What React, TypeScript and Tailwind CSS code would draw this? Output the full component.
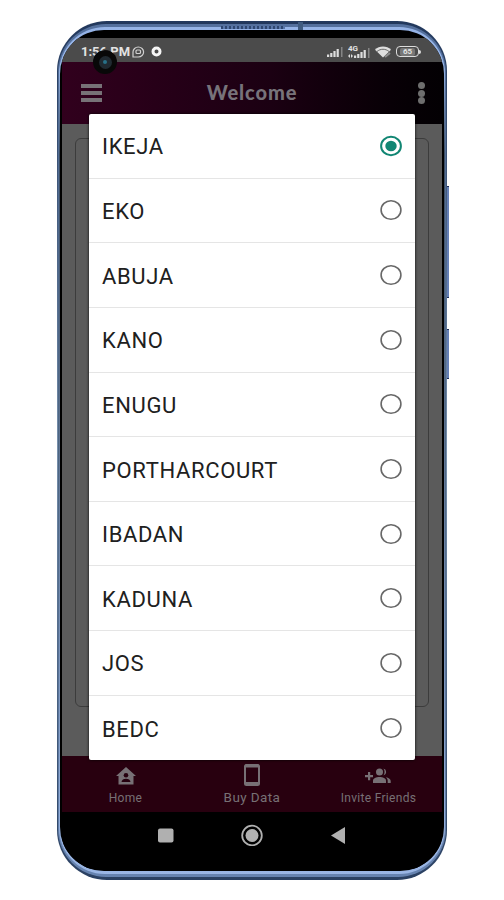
import { useState } from "react";

const LOCATIONS = [
  "IKEJA",
  "EKO",
  "ABUJA",
  "KANO",
  "ENUGU",
  "PORTHARCOURT",
  "IBADAN",
  "KADUNA",
  "JOS",
  "BEDC",
];

function Signal() {
  return (
    <svg width="16" height="11" viewBox="0 0 16 11" fill="#dedede">
      <rect x="0" y="8.5" width="2.2" height="2.5" />
      <rect x="3.2" y="7" width="2.2" height="4" />
      <rect x="6.4" y="5" width="2.2" height="6" />
      <rect x="9.6" y="3" width="2.2" height="8" />
      <rect x="14" y="1" width="1.500" height="10" fill="#858585" />
    </svg>
  );
}

function StatusBar() {
  return (
    <div className="flex h-[24px] items-center bg-[#4b4b4b] pl-[19px] pr-[21px] pt-[3px] text-[#e2e2e2]">
      <span className="w-[49px] whitespace-nowrap text-[13px] font-bold leading-none">1:56 PM</span>
      <svg className="ml-[2px]" width="13" height="12" viewBox="0 0 13 12" fill="none" stroke="#d0d0d0" strokeWidth="1.2">
        <path d="M1 11V6a5.3 5 0 1 1 5.3 5z" />
        <rect x="4" y="4" width="4.500" height="3.500" rx="1" />
      </svg>
      <svg className="ml-[6px]" width="11" height="11" viewBox="0 0 11 11">
        <circle cx="5.5" cy="5.5" r="3.5" fill="none" stroke="#f5f5f5" strokeWidth="3" />
      </svg>
      <div className="ml-auto flex items-center">
        <Signal />
        <div className="relative ml-[5px] flex h-[12px] w-[22px] items-end justify-end">
          <span className="absolute -top-px left-0 text-[8px] font-bold leading-none">4G</span>
          <svg className="absolute bottom-0 left-0" width="5" height="4" viewBox="0 0 5 4" fill="#dedede">
            <path d="M0 2l2-2v4zM5 2L3 0v4z" />
          </svg>
          <Signal />
        </div>
        <svg className="ml-[5px]" width="16" height="12" viewBox="0 0 16 12" fill="#dedede">
          <path d="M0 3.8C4-.6 12-.6 16 3.8L8 11.5z" />
          <path d="M2 5.5c3.5-3 8.500-3 12 0" fill="none" stroke="#4b4b4b" strokeWidth="0.8" />
          <path d="M10 11l5-4" stroke="#8d8d8d" strokeWidth="2" />
        </svg>
        <div className="ml-[5px] flex h-[11px] w-[23px] items-center justify-center rounded-[4px] border-[1.500px] border-[#dcdcdc] text-[8px] font-bold leading-none">
          <span className="rounded-[2px] bg-[#777777] px-[3px]">65</span>
        </div>
        <div className="h-[4px] w-[2px] rounded-r bg-[#dcdcdc]" />
      </div>
    </div>
  );
}

function Header() {
  return (
    <header className="flex h-[62px] items-center justify-between bg-linear-to-r from-[#31001d] via-[#1b0012] via-55% to-[#030003] pl-[19px] pr-[17px]">
      <div className="flex w-[21px] flex-col gap-[3.500px]">
        <div className="h-[3.500px] bg-[#777277]" />
        <div className="h-[3.500px] bg-[#777277]" />
        <div className="h-[3.500px] bg-[#777277]" />
      </div>
      <h1 className="ml-[-16px] pb-[2px] font-['Lato',sans-serif] text-[20px] font-black tracking-[0.9px] text-[#77737a]">
        Welcome
      </h1>
      <div className="flex flex-col gap-[0.500px]">
        <div className="size-[7px] rounded-full bg-[#6e6e6e]" />
        <div className="size-[7px] rounded-full bg-[#6e6e6e]" />
        <div className="size-[7px] rounded-full bg-[#6e6e6e]" />
      </div>
    </header>
  );
}

function HomeIcon() {
  return (
    <svg width="20" height="18" viewBox="0 0 20 18">
      <path d="M10 0L0 9h2.500v8.500h15V9H20z" fill="#777075" />
      <circle cx="10" cy="8.200" r="2.300" fill="#26000f" />
      <path d="M5.500 15c0-4.500 9-4.500 9 0z" fill="#26000f" />
    </svg>
  );
}

function InviteIcon() {
  return (
    <svg width="27" height="16" viewBox="0 0 27 16" fill="#777075">
      <path d="M3 4h2.200v3H8v2.200H5.200v3H3v-3H0V7h3z" />
      <circle cx="14.500" cy="4" r="3.500" />
      <path d="M8 15v-2.300c0-5 13-5 13 0V15z" />
      <path d="M18.500.6a3.500 3.500 0 0 1 0 6.800c1.400-2 1.400-4.800 0-6.800z" />
      <path d="M20.700 9.200c3.200.6 5 2 5 3.800v2h-3v-2.300c0-1.400-.7-2.600-2-3.500z" />
    </svg>
  );
}

function BottomNav() {
  return (
    <nav className="flex h-[56px] bg-[#28000f] text-[#777075]">
      <div className="flex w-[127px] flex-col items-center pt-[11px]">
        <HomeIcon />
        <span className="mt-[6px] text-[12px] leading-[14px] tracking-[0.3px]">Home</span>
      </div>
      <div className="flex w-[126px] flex-col items-center pt-[8px]">
        <svg width="16" height="22" viewBox="0 0 16 22">
          <rect x="1" y="1" width="14" height="20" rx="1.500" fill="none" stroke="#777075" strokeWidth="2" />
          <path d="M1 2h14M1 19.500h14" stroke="#777075" strokeWidth="3" />
        </svg>
        <span className="mt-[4px] text-[13.500px] leading-[15px] tracking-[0.400px]">Buy Data</span>
      </div>
      <div className="flex w-[127px] flex-col items-center pt-[12px]">
        <InviteIcon />
        <span className="mt-[7px] whitespace-nowrap text-[12px] leading-[14px] tracking-[0.300px]">Invite Friends</span>
      </div>
    </nav>
  );
}

function SystemNav() {
  return (
    <div className="flex h-[57px] items-start justify-center bg-black pt-[12px]">
      <svg width="190" height="22" viewBox="0 0 190 22" fill="#b0b0b0">
        <rect x="1" y="4.500" width="15.500" height="14" rx="2" />
        <circle cx="95" cy="11.500" r="9.800" fill="none" stroke="#b0b0b0" strokeWidth="1.800" />
        <circle cx="95" cy="11.500" r="6.500" />
        <path d="M174 11.500l14-8.500v17z" />
      </svg>
    </div>
  );
}

export default function App() {
  const [selected, setSelected] = useState("IKEJA");

  return (
    <div className="h-[900px] w-[504px] overflow-hidden bg-white pl-[57px] pt-[21px] font-['Roboto',sans-serif]">
      <div className="relative h-[859px] w-[390px] rounded-[50px] bg-linear-to-b from-[#22385c] via-[#7890ad] to-[#2a4062] px-px py-[3px]">
        <div className="absolute left-full top-[165px] h-[112px] w-[2px] border-y border-[#1c2c55] bg-[#647fb5]" />
        <div className="absolute left-full top-[308px] h-[50px] w-[2px] border-y border-[#1c2c55] bg-[#647fb5]" />
        <div className="h-full rounded-[48px] bg-linear-to-b from-[#54709d] via-[#4d6580] to-[#6683b0] px-px py-[3px]">
          <div className="h-full rounded-[46px] bg-linear-to-b from-[#95b3e6] from-5% via-[#3a4b60] via-15% to-[#9ab6e5] px-px py-[3px]">
            <div className="h-full overflow-hidden rounded-[44px] bg-black px-[2px] pt-[8px]">
              <StatusBar />
              <Header />
              <main className="h-[632px] bg-[#5b5b5b] px-[13px] pt-[14px]">
                <div className="h-[569px] rounded-[6px] border border-[#3c3c3c]" />
              </main>
              <BottomNav />
              <SystemNav />
            </div>
          </div>
        </div>

        <div className="absolute left-[164px] top-[5px] h-[3px] w-[64px] bg-[repeating-linear-gradient(90deg,#2f4770_0_2px,#5876a8_2px_4px)]" />
        <div className="absolute left-[241px] top-px h-[8px] w-[5px] bg-[#3f5b80]" />

        <div className="absolute left-[36px] top-[29px] flex size-[24px] items-center justify-center rounded-full bg-[#080808]">
          <div className="flex size-[13px] items-center justify-center rounded-full bg-[#202a31]">
            <div className="size-[4px] rounded-full bg-[#287188]" />
          </div>
        </div>

        <ul className="absolute left-[32px] top-[93px] h-[646px] w-[326px] rounded-[2px] bg-white shadow-[0_0_3px_#000]">
          {LOCATIONS.map((name) => (
            <li key={name} className="h-[64.65px] border-b border-[#e5e5e5] last:border-b-0">
              <button
                type="button"
                onClick={() => setSelected(name)}
                className="flex h-full w-full items-center justify-between px-[13px] text-[22px] tracking-[0.65px] text-[#202020]"
              >
                <span className="pt-[2px]">{name}</span>
                <svg width="22" height="22" viewBox="0 0 22 22">
                  <ellipse
                    cx="11"
                    cy="11"
                    rx="9.900"
                    ry="9.300"
                    fill="none"
                    stroke={selected === name ? "#118673" : "#686868"}
                    strokeWidth={selected === name ? 2 : 1.6}
                  />
                  {selected === name && <ellipse cx="11" cy="11" rx="5.700" ry="5.300" fill="#118673" />}
                </svg>
              </button>
            </li>
          ))}
        </ul>
      </div>
    </div>
  );
}
